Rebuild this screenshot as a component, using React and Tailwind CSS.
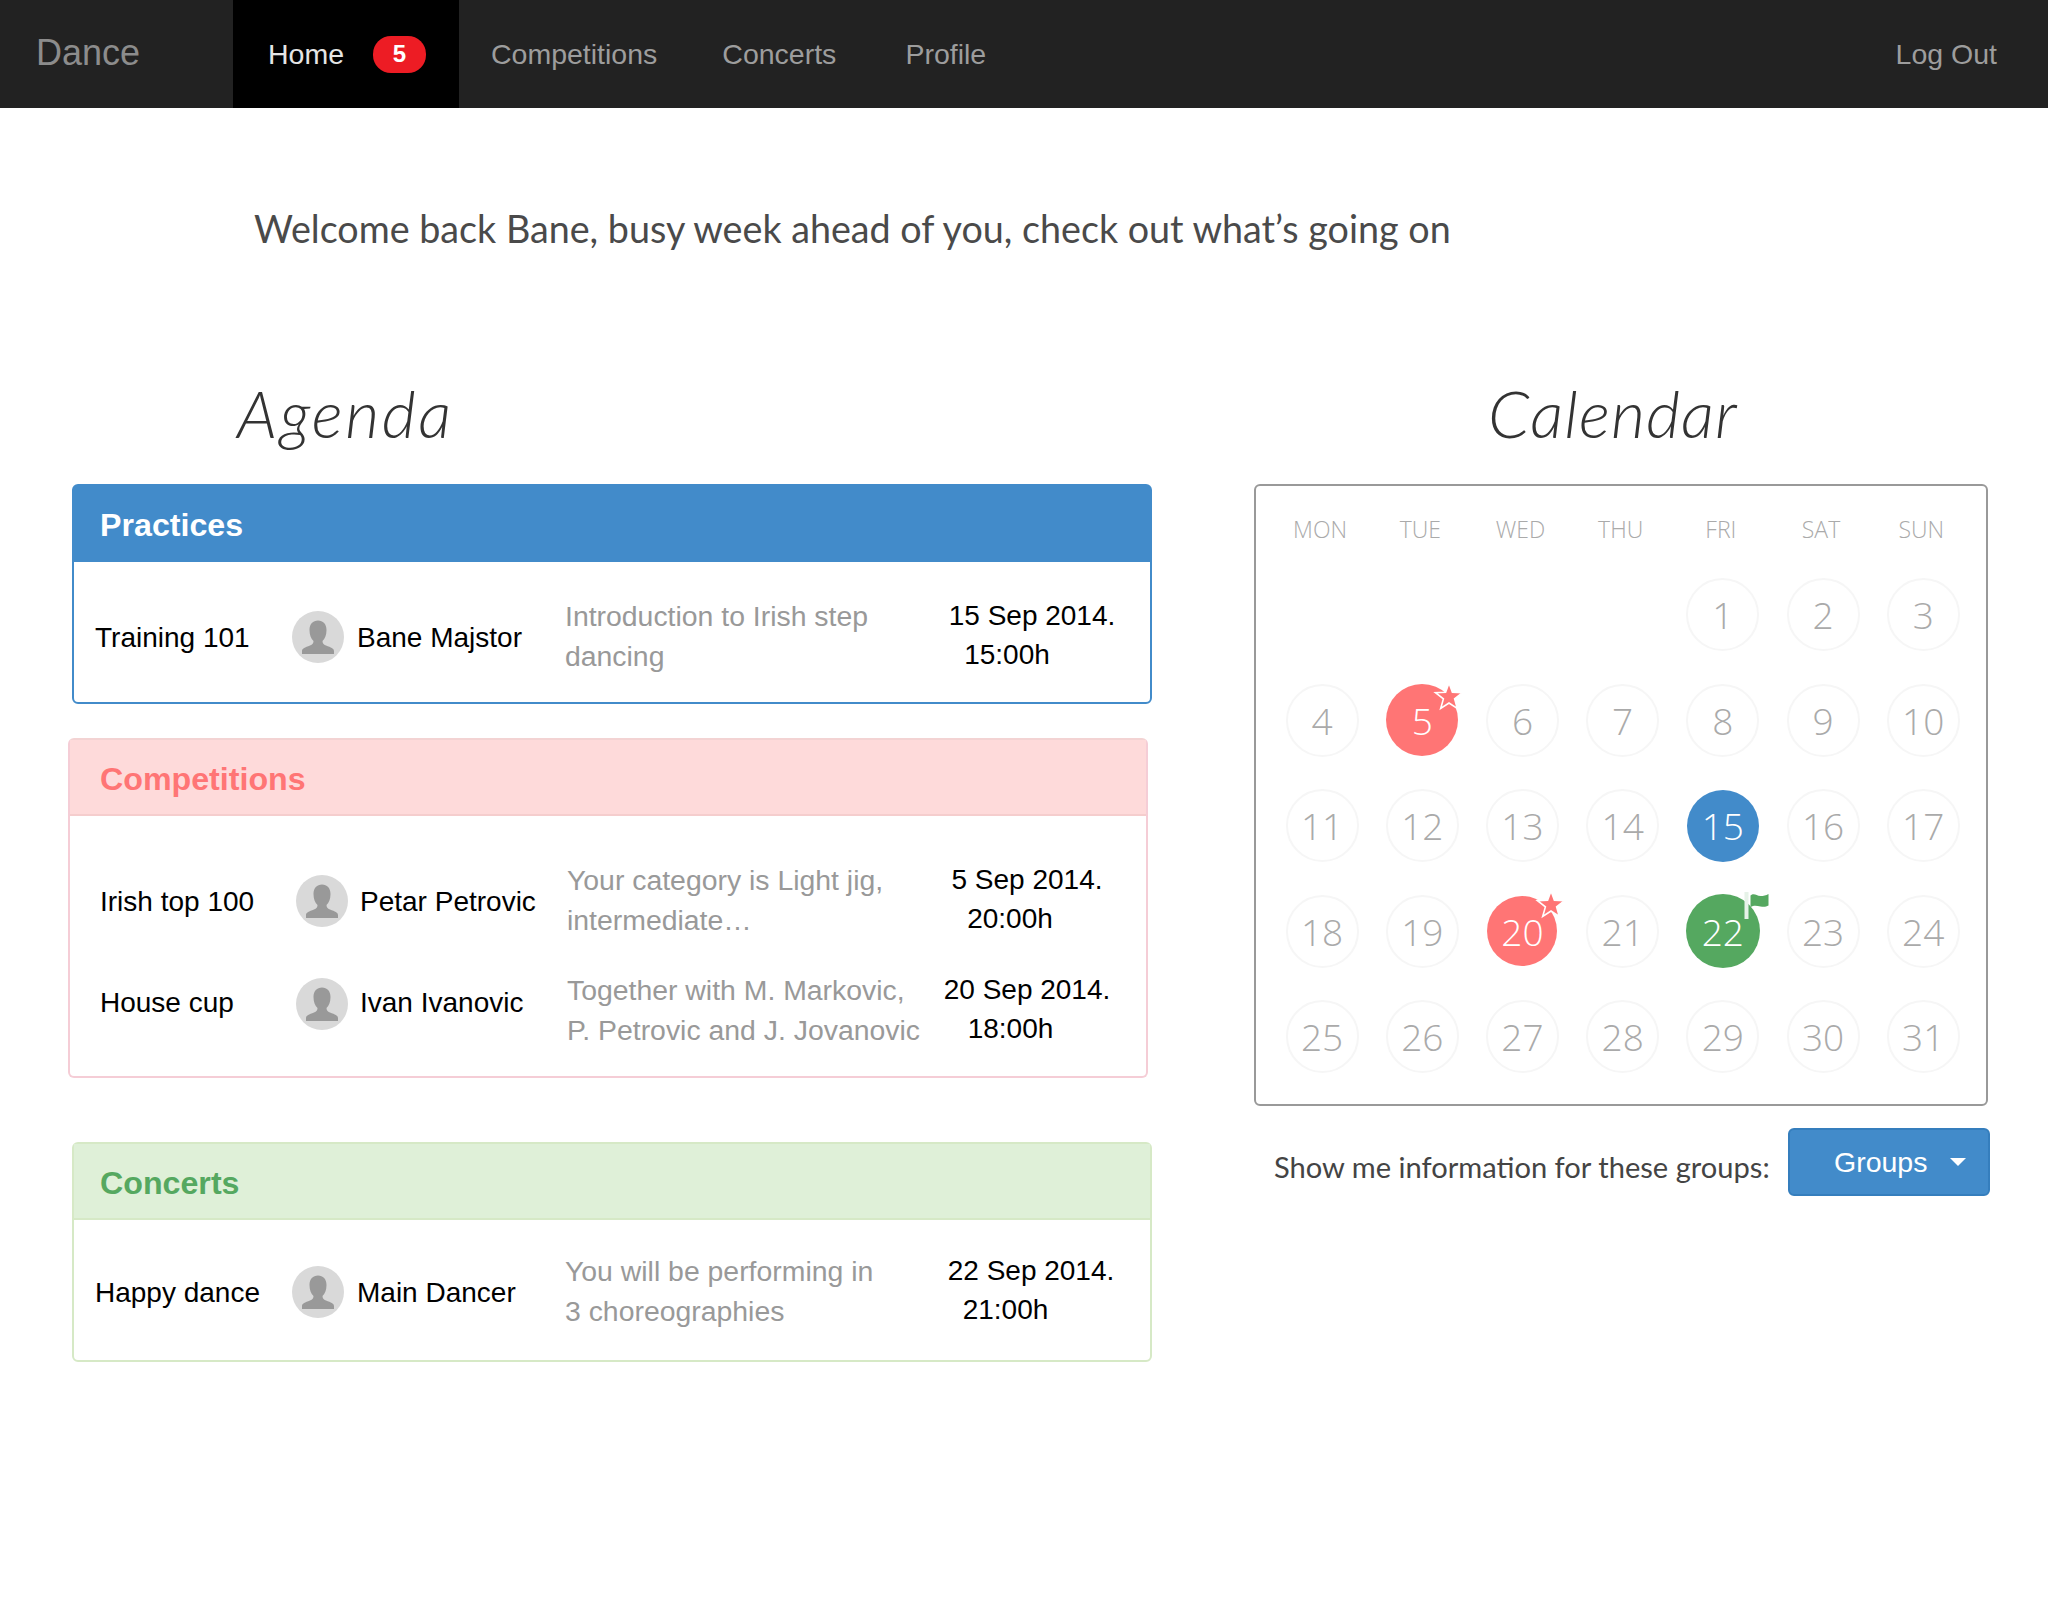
const SANS = "font-['Liberation_Sans',Arial,sans-serif]";

function Avatar({ cls }) {
  return (
    <div className={`h-[52px] w-[52px] shrink-0 rounded-full bg-[#d9d9d9] ${cls}`}>
      <svg viewBox="0 0 52 52" className="h-full w-full">
        <path d="M10 43v-3c0-2.500 3-3.500 8-5.500 2.500-1 3.500-2 3.500-4.500-2.500-2.500-4-6-4-11 0-6 3.500-9.500 8.500-9.500s8.500 3.500 8.500 9.500c0 5-1.500 8.500-4 11 0 2.500 1 3.500 3.500 4.500 5 2 8 3 8 5.500v3z" fill="#999999" />
      </svg>
    </div>
  );
}

function Row({ title, name, desc, date, time, timeClass, titleWidth, nameWidth, descWidth, textShift = "pt-[4px]", avatarShift = "mt-[2px]" }) {
  return (
    <div className="flex h-[80px] items-center text-[28px] leading-[40px] text-black">
      <div className={`${titleWidth} shrink-0 ${textShift} whitespace-nowrap`}>{title}</div>
      <Avatar cls={avatarShift} />
      <div className={`${nameWidth} shrink-0 ${textShift} whitespace-nowrap`}>{name}</div>
      <div className={`${descWidth} shrink-0 text-[28.400px] text-[#999999] whitespace-nowrap`}>
        {desc.map((l) => <div key={l}>{l}</div>)}
      </div>
      <div className="w-[200px] shrink-0 pb-[3px] text-center whitespace-nowrap leading-[39px]">
        <div>{date}</div>
        <div className={timeClass}>{time}</div>
      </div>
    </div>
  );
}

function Panel({ title, wrap, head, pad = "pl-[26px]", children }) {
  return (
    <div className={`rounded-[6px] border-2 ${wrap}`}>
      <div className={`flex h-[76px] items-center border-b-2 pt-[4px] ${pad} text-[32.200px] font-bold ${head}`}>{title}</div>
      {children}
    </div>
  );
}

function Star({ pos }) {
  return (
    <svg viewBox="0 0 32 32" className={`absolute h-[32px] w-[32px] ${pos}`}>
      <polygon points="16,3 19.400,12.300 29.500,12.700 21.600,18.900 24.300,28.500 16,23 7.700,28.500 10.400,18.900 2.500,12.700 12.600,12.300" fill="#ff7575" stroke="#ffffff" strokeWidth="1.600" />
    </svg>
  );
}

function Flag() {
  return (
    <svg viewBox="0 0 30 30" className="absolute left-[58px] top-[-5px] h-[30px] w-[30px]">
      <rect x="0.500" y="3" width="4" height="27" fill="#e6f2e8" />
      <path d="M6.500 6.500c3.500-3 6 .5 10 .5 3 0 5.500-.5 8-2v11.500c-2.500 1.500-5 1.500-8 1-4-1-6.500-1.500-10 .5z" fill="#55a860" />
    </svg>
  );
}

const cellBase = "relative flex items-center justify-center rounded-full text-[37px]";

function Day({ n }) {
  if (!n) return <div />;
  let cls = "h-[73px] w-[73px] border-2 border-[#f6f6f6] text-[#aaaaaa]";
  let mark = null;
  if (n === 5) { cls = "h-[72px] w-[72px] bg-[#ff7575] text-white"; mark = <Star pos="left-[47px] top-[-4px]" />; }
  if (n === 20) { cls = "h-[70px] w-[70px] bg-[#ff7575] text-white"; mark = <Star pos="left-[48px] top-[-8px]" />; }
  if (n === 15) cls = "h-[72px] w-[72px] bg-[#428bca] text-white";
  if (n === 22) { cls = "h-[74px] w-[74px] bg-[#55a860] text-white"; mark = <Flag />; }
  return (
    <div className="flex items-center justify-center">
      <div className={`${cellBase} ${cls}`}>
        {n}
        {mark}
      </div>
    </div>
  );
}

export default function App() {
  const days = [0, 0, 0, 0, 1, 2, 3];
  for (let i = 4; i <= 31; i++) days.push(i);
  const heading = "h-[80px] font-['Lato',sans-serif] text-[66px] font-light italic leading-[76px] text-[#333333]";
  return (
    <div className="min-h-[1600px] bg-white">
      <nav className={`flex h-[108px] items-center justify-between bg-[#222222] text-[28.500px] text-[#9d9d9d] ${SANS}`}>
        <div className="flex h-full items-center">
          <div className="w-[233px] pb-[2px] pl-[36px] text-[36px] text-[#8c8c8c]">Dance</div>
          <div className="flex h-full w-[226px] items-center bg-black pl-[35px] text-[#e5e5e5]">
            Home
            <span className="ml-[29px] flex h-[37px] w-[53px] items-center justify-center rounded-[18px] bg-[#ed1c24] text-[24px] font-bold text-white">5</span>
          </div>
          <div className="ml-[32px]">Competitions</div>
          <div className="ml-[65px]">Concerts</div>
          <div className="ml-[69px]">Profile</div>
        </div>
        <div className="pr-[51px]">Log Out</div>
      </nav>

      <div className="ml-[254px] mt-[97px] h-[48px] font-['Lato',sans-serif] text-[37.700px] leading-[48px] text-[#4a4a4a]">
        Welcome back Bane, busy week ahead of you, check out what’s going on
      </div>

      <main className="mt-[122px] flex pl-[72px]">
        <section className={`w-[1080px] shrink-0 ${SANS}`}>
          <div className={`${heading} pl-[165px] tracking-[2.500px]`}>Agenda</div>
          <div className="mt-[29px]">
            <Panel title="Practices" wrap="border-[#428bca]" head="border-[#428bca] bg-[#428bca] text-white">
              <div className="pl-[21px] pt-[34px] pb-[26px]">
                <Row title="Training 101" name="Bane Majstor" desc={["Introduction to Irish step", "dancing"]} date="15 Sep 2014." time="15:00h" timeClass="pr-[50px]" titleWidth="w-[197px]" nameWidth="w-[221px] pl-[13px]" descWidth="w-[367px]" />
              </div>
            </Panel>
          </div>
          <div className="-ml-[4px] mt-[34px] w-[1080px]">
            <Panel title="Competitions" pad="pl-[30px]" wrap="border-[#f5cdd6] border-t-[#f3d3d3]" head="border-[#f5cdcd] bg-[#fedada] text-[#ff7575]">
              <div className="flex flex-col gap-[30px] pl-[30px] pt-[44px] pb-[26px]">
                <Row title="Irish top 100" name="Petar Petrovic" desc={["Your category is Light jig,", "intermediate…"]} date="5 Sep 2014." time="20:00h" timeClass="pr-[34px]" titleWidth="w-[196px]" nameWidth="w-[219px] pl-[12px]" descWidth="w-[360px]" />
                <Row title="House cup" name="Ivan Ivanovic" desc={["Together with M. Markovic,", "P. Petrovic and J. Jovanovic"]} date="20 Sep 2014." time="18:00h" timeClass="pr-[33px]" titleWidth="w-[196px]" nameWidth="w-[219px] pl-[12px]" descWidth="w-[360px]" textShift="pb-[14px]" avatarShift="mb-[13px]" />
              </div>
            </Panel>
          </div>
          <div className="mt-[64px]">
            <Panel title="Concerts" wrap="border-[#d6e9c6]" head="border-[#d6e9c6] bg-[#dff0d8] text-[#55a860]">
              <div className="pl-[21px] pt-[31px] pb-[29px]">
                <Row title="Happy dance" name="Main Dancer" desc={["You will be performing in", "3 choreographies"]} date="22 Sep 2014." time="21:00h" timeClass="pr-[51px]" titleWidth="w-[197px]" nameWidth="w-[221px] pl-[13px]" descWidth="w-[366px]" />
              </div>
            </Panel>
          </div>
        </section>

        <section className="ml-[102px] w-[736px] shrink-0">
          <div className={`${heading} pl-[234px] tracking-[1px]`}>Calendar</div>
          <div className="mt-[29px] h-[622px] w-[734px] rounded-[6px] border-2 border-[#999999] pl-[16px] pt-[28px] font-['Open_Sans',sans-serif] font-light">
            <div className="grid h-[30px] grid-cols-[repeat(7,100.200px)] pr-[4px] text-center text-[23px] leading-[30px] text-[#aaaaaa]">
              {["MON", "TUE", "WED", "THU", "FRI", "SAT", "SUN"].map((d) => (
                <div key={d} className="-ml-[4px]">{d}</div>
              ))}
            </div>
            <div className="mt-[18px] grid grid-cols-[repeat(7,100.200px)] auto-rows-[105.500px]">
              {days.map((n, i) => <Day key={i} n={n} />)}
            </div>
          </div>
          <div className="mt-[22px] flex h-[68px] items-center">
            <div className="ml-[20px] w-[514px] pt-[9px] font-['Lato',sans-serif] text-[29.100px] text-[#444444] whitespace-nowrap">Show me information for these groups:</div>
            <button className={`flex h-[68px] w-[202px] items-center rounded-[6px] border-2 border-[#357ebd] bg-[#428bca] pl-[44px] text-[28.500px] text-white ${SANS}`}>
              Groups
              <span className="ml-[23px] h-0 w-0 border-x-[8px] border-t-[8px] border-x-transparent border-t-white" />
            </button>
          </div>
        </section>
      </main>
    </div>
  );
}
